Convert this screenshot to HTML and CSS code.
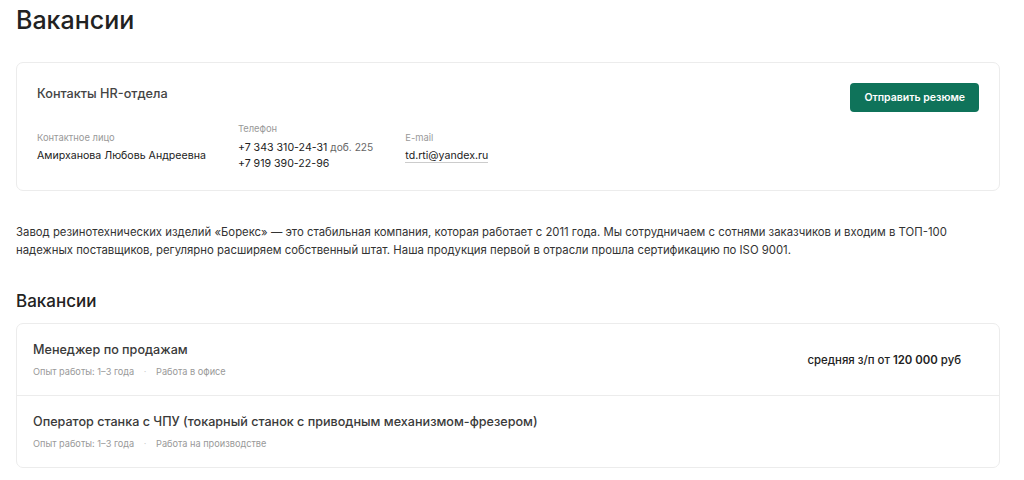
FILE: index.html
```html
<!DOCTYPE html>
<html lang="ru">
<head>
    <meta charset="UTF-8">
    <meta name="viewport" content="width=device-width, initial-scale=1.0">
    <title>Вакансии</title>
    <link rel="stylesheet" href="styles.css">
</head>
<body>
    <div class="page">
        <h1>Вакансии</h1>

        <!-- HR contacts -->
        <div class="card contacts">
            <div class="contacts-head">
                <div class="contacts-title">Контакты HR-отдела</div>
                <a href="#" class="button">Отправить резюме</a>
            </div>
            <div class="contacts-info">
                <div class="info-col">
                    <div class="info-label">Контактное лицо</div>
                    <div class="info-value">Амирханова Любовь Андреевна</div>
                </div>
                <div class="info-col">
                    <div class="info-label">Телефон</div>
                    <div class="info-value">+7 343 310-24-31 <span class="muted">доб. 225</span></div>
                    <div class="info-value">+7 919 390-22-96</div>
                </div>
                <div class="info-col">
                    <div class="info-label">E-mail</div>
                    <div class="info-value"><a href="#" class="mail">td.rti@yandex.ru</a></div>
                </div>
            </div>
        </div>

        <p class="about">Завод резинотехнических изделий «Борекс» — это стабильная компания, которая работает с 2011 года. Мы сотрудничаем с сотнями заказчиков и входим в ТОП-100 надежных поставщиков, регулярно расширяем собственный штат. Наша продукция первой в отрасли прошла сертификацию по ISO 9001.</p>

        <h2>Вакансии</h2>

        <!-- Vacancy list -->
        <div class="card vacancies">
            <div class="vacancy">
                <div class="vacancy-main">
                    <div class="vacancy-title">Менеджер по продажам</div>
                    <div class="vacancy-meta">
                        <span>Опыт работы: 1–3 года</span>
                        <span class="dot">·</span>
                        <span>Работа в офисе</span>
                    </div>
                </div>
                <div class="salary">средняя з/п от <b>120 000</b> руб</div>
            </div>
            <div class="vacancy">
                <div class="vacancy-main">
                    <div class="vacancy-title">Оператор станка с ЧПУ (токарный станок с приводным механизмом-фрезером)</div>
                    <div class="vacancy-meta">
                        <span>Опыт работы: 1–3 года</span>
                        <span class="dot">·</span>
                        <span>Работа на производстве</span>
                    </div>
                </div>
            </div>
        </div>
    </div>
</body>
</html>
```
FILE: styles.css
```css
/* General */
body {
    margin: 0;
    background: white;
    color: #222;
    font-family: Inter, "Noto Sans", sans-serif;
}

.page {
    padding: 0 24px 0 16px;
}

h1 {
    margin: 0;
    padding-top: 4px;
    font-size: 25px;
    line-height: 32px;
    font-weight: 500;
    color: #222;
}

h2 {
    margin: 30px 0 10px;
    font-size: 17px;
    line-height: 24px;
    font-weight: 500;
    color: #222;
}

/* Cards */
.card {
    background: white;
    border: 1px solid #ececec;
    border-radius: 7px;
}

.contacts {
    margin-top: 26px;
    padding: 20px 20px 18px;
}

.contacts-head {
    display: flex;
    justify-content: space-between;
    align-items: flex-start;
}

.contacts-title {
    margin-top: 3px;
    font-size: 12.7px;
    font-weight: 500;
    color: #444;
}

.button {
    background-color: #0f735a;
    color: white;
    padding: 8px 14px;
    border-radius: 4px;
    font-size: 10.5px;
    font-weight: 600;
    line-height: 13px;
    text-decoration: none;
}

.contacts-info {
    display: flex;
    align-items: center;
    gap: 32px;
    margin-top: 10px;
}

.info-label {
    font-size: 9.4px;
    line-height: 14px;
    color: #999;
    margin-bottom: 3px;
}

.info-value {
    font-size: 10.6px;
    line-height: 16px;
    color: #222;
}

.muted {
    font-size: 10.2px;
    color: #666;
}

.mail {
    color: #222;
    text-decoration: none;
    border-bottom: 1px solid #ccc;
}

/* About text */
.about {
    margin: 32px 0 0;
    font-size: 11.35px;
    line-height: 18px;
    color: #333;
}

/* Vacancies */
.vacancy {
    display: flex;
    align-items: center;
    justify-content: space-between;
    padding: 16.5px 38px 16.5px 16px;
    border-bottom: 1px solid #ececec;
}

.vacancy:last-child {
    border-bottom: none;
}

.vacancy-title {
    font-size: 12.6px;
    line-height: 18px;
    font-weight: 500;
    color: #3a3a3a;
}

.vacancy-meta {
    margin-top: 6px;
    font-size: 9.2px;
    line-height: 14px;
    color: #999;
}

.dot {
    margin: 0 7px;
    color: #ccc;
}

.salary {
    font-size: 11.4px;
    font-weight: 500;
    color: #222;
}

.salary b {
    font-weight: 600;
}
```
